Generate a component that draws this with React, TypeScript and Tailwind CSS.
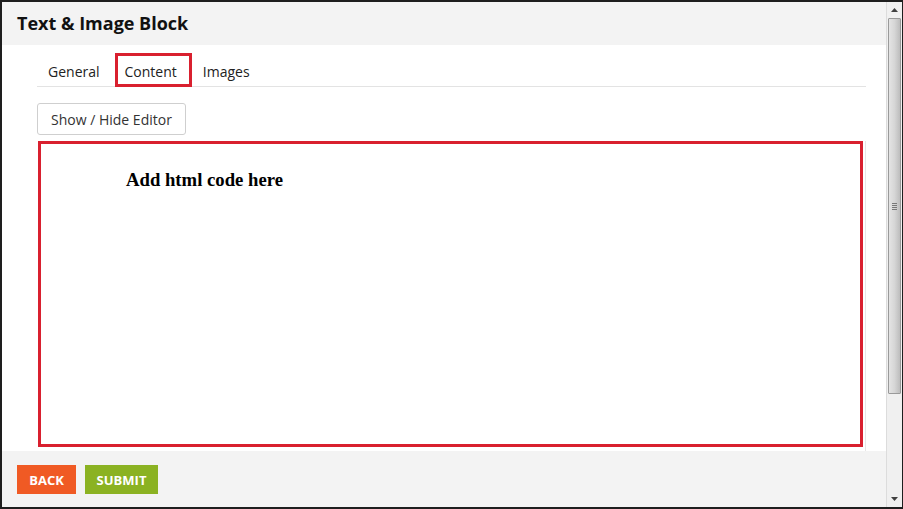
import React from 'react';

const tabs = ['General', 'Content', 'Images'];

function Scrollbar() {
  return (
    <div className="w-[16px] flex flex-col bg-[#f0f0f0] border-l border-[#dcdcdc]">
      <div className="h-[16px] flex items-center justify-center">
        <svg width="7" height="4" viewBox="0 0 7 4">
          <path d="M0 4 L3.5 0 L7 4 Z" fill="#404040" />
        </svg>
      </div>
      <div className="h-[376px] mx-[1px] rounded-[1px] border border-[#9a9a9a] bg-gradient-to-r from-[#e4e4e4] via-[#d6d6d6] to-[#bdbdbd] flex items-center justify-center">
        <div className="flex flex-col gap-[1px]">
          <div className="w-[5px] h-px bg-[#777]" />
          <div className="w-[5px] h-px bg-[#777]" />
          <div className="w-[5px] h-px bg-[#777]" />
          <div className="w-[5px] h-px bg-[#777]" />
        </div>
      </div>
      <div className="flex-1" />
      <div className="h-[16px] flex items-center justify-center">
        <svg width="7" height="4" viewBox="0 0 7 4">
          <path d="M0 0 L3.5 4 L7 0 Z" fill="#404040" />
        </svg>
      </div>
    </div>
  );
}

export default function App() {
  return (
    <div
      className="w-[903px] h-[509px] bg-[#1e1e1e] pt-[2px] pb-[2px] pl-[2px] pr-[1px] flex"
      style={{ fontFamily: '"Open Sans", "Liberation Sans", sans-serif' }}
    >
      <div className="flex-1 flex flex-col bg-white">
        {/* Header */}
        <div className="h-[43px] bg-[#f3f3f3] flex items-center pl-[15px] pb-[1px]">
          <h1 className="text-[18px] font-bold text-[#111]">Text &amp; Image Block</h1>
        </div>

        {/* Body */}
        <div className="h-[406px] bg-white pl-[35px] pr-[20px] pt-[8px]">
          <div className="h-[34px] flex items-start border-b border-[#e3e3e3]">
            {tabs.map((t) => (
              <div
                key={t}
                className={`h-[34px] flex items-center pt-[2px] text-[14px] text-[#222] ${
                  t === 'Content'
                    ? 'ml-[4px] border-[3px] border-[#d9202f] pl-[7px] pr-[12px]'
                    : t === 'General'
                      ? 'px-[11px]'
                      : 'pl-[11px]'
                }`}
              >
                {t}
              </div>
            ))}
          </div>

          <button className="mt-[16px] h-[32px] px-[13px] border border-[#cfcfcf] rounded-[3px] bg-white text-[14px] text-[#333]">
            Show / Hide Editor
          </button>

          <div className="mt-[6px] h-[310px] border-r border-[#e6e6e6] pl-[1px] pr-[2px]">
            <div className="h-[306px] border-[3px] border-[#d9202f] pl-[85px] pt-[25px]">
              <p
                className="text-[18.7px] font-bold text-black leading-[1.15]"
                style={{ fontFamily: '"Liberation Serif", "Times New Roman", serif' }}
              >
                Add html code here
              </p>
            </div>
          </div>
        </div>

        {/* Footer */}
        <div className="flex-1 bg-[#f3f3f3] flex items-start gap-[9px] pl-[15px] pt-[14px]">
          <button className="h-[29px] w-[59px] pt-[2px] bg-[#f05a24] text-white text-[13px] font-bold">
            BACK
          </button>
          <button className="h-[29px] w-[73px] pt-[2px] bg-[#8bb222] text-white text-[13px] font-bold">
            SUBMIT
          </button>
        </div>
      </div>
      <Scrollbar />
    </div>
  );
}
